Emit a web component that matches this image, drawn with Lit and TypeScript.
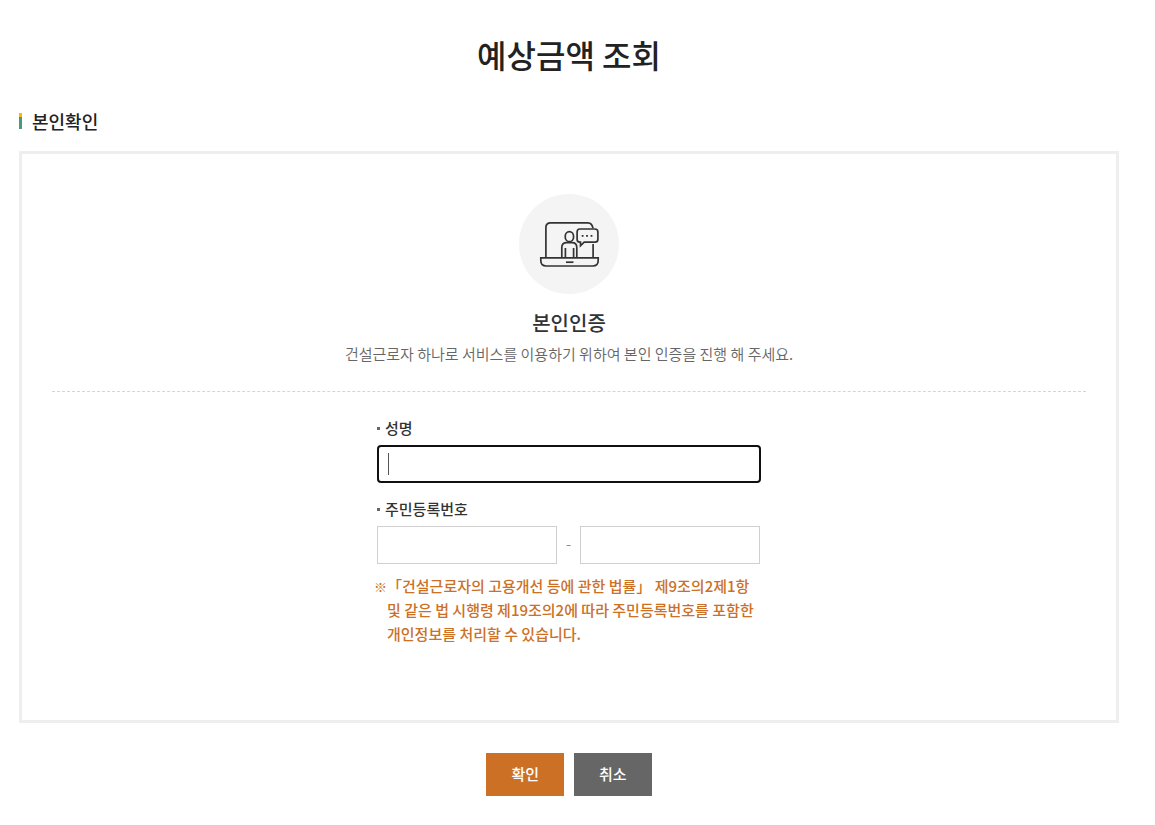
import { LitElement, html, css } from "lit";
import { customElement } from "lit/decorators.js";

@customElement("app-root")
export class AppRoot extends LitElement {
  static styles = css`
    :host {
      display: block;
      box-sizing: border-box;
      padding: 30px 36px 28px 19px;
      background: #fff;
      color: #222;
      font-family: "Noto Sans CJK KR", "Noto Sans", sans-serif;
      font-size: 15px;
      line-height: 24px;
    }
    * {
      box-sizing: border-box;
    }
    h1,
    h2,
    h3,
    p {
      margin: 0;
      font-weight: 500;
    }
    .page-title {
      font-size: 32px;
      line-height: 48px;
      text-align: center;
    }
    .section-title {
      display: flex;
      align-items: center;
      gap: 10px;
      margin: 31px 0 18px;
      font-size: 18px;
      line-height: 24px;
    }
    .section-title::before {
      content: "";
      width: 3px;
      height: 16px;
      background: linear-gradient(#fbb800 4px, #469b78 4px);
    }
    .panel {
      padding: 40px 30px 74px;
      border: 3px solid #eee;
    }
    .intro {
      display: flex;
      flex-direction: column;
      align-items: center;
      padding-bottom: 25px;
      border-bottom: 1px dashed #d5d5d5;
      text-align: center;
    }
    .badge {
      width: 100px;
      height: 100px;
      border-radius: 50%;
      background: #f4f4f4;
    }
    .badge svg {
      display: block;
    }
    .intro-title {
      margin-top: 14px;
      color: #333;
      font-size: 20px;
      line-height: 30px;
    }
    .intro-text {
      margin-top: 4px;
      color: #666;
      font-weight: 350;
    }
    .form {
      width: 384px;
      max-width: 100%;
      margin: 24px auto 0;
    }
    .label {
      display: flex;
      align-items: center;
      gap: 5px;
      margin-bottom: 5px;
      color: #333;
      font-weight: 500;
    }
    .label::before {
      content: "";
      width: 3px;
      height: 3px;
      background: #666;
    }
    .field {
      display: block;
      height: 38px;
      margin: 0;
      padding: 0 10px;
      border: 1px solid #d0d0d0;
      border-radius: 0;
      outline: none;
      background: #fff;
      color: #666;
      font: inherit;
    }
    .field.active {
      width: 100%;
      border: 2px solid #101010;
      border-radius: 4px;
      background: linear-gradient(#555, #555) 9px center / 1px 22px no-repeat #fff;
    }
    .field.half {
      flex: 0 1 180px;
      min-width: 0;
    }
    .row {
      display: flex;
      align-items: center;
    }
    .second {
      margin-top: 14px;
    }
    .dash {
      width: 23px;
      padding-bottom: 2px;
      color: #888;
      text-align: center;
      font-weight: 350;
    }
    .note {
      margin-top: 10px;
      padding-left: 10px;
      color: #cc7026;
      font-weight: 500;
      text-indent: -13px;
    }
    .mark {
      font-size: 13px;
      font-weight: 400;
      line-height: 1;
    }
    .actions {
      display: flex;
      justify-content: center;
      gap: 10px;
      margin-top: 30px;
    }
    .button {
      height: 43px;
      padding: 0 25px 2px;
      border: 0;
      background: #666;
      color: #fff;
      font: inherit;
      font-weight: 500;
      cursor: pointer;
    }
    .button.primary {
      background: #cc7026;
    }
  `;

  render() {
    return html`
      <main>
        <h1 class="page-title">예상금액 조회</h1>
        <h2 class="section-title">본인확인</h2>
        <form @submit=${(e: Event) => e.preventDefault()}>
          <section class="panel">
            <div class="intro">
              <div class="badge">
                <svg
                  width="100"
                  height="100"
                  viewBox="0 0 100 100"
                  fill="none"
                  stroke="#333"
                  stroke-width="1.7"
                  aria-hidden="true"
                >
                  <path d="M26.9 63V33.5Q26.9 28.8 31.6 28.8H69Q73 28.8 74 34.2M74.1 50V63" />
                  <path d="M21.8 63.8H79.2V66.5Q79.2 72 73.7 72H27.3Q21.8 72 21.8 66.5Z" />
                  <path d="M47 68.2H54.5" />
                  <ellipse cx="50.4" cy="42.7" rx="4.2" ry="5" />
                  <path d="M42.8 63V53.5Q42.8 48.6 47.7 48.6H53.1Q57.8 48.6 57.8 53.5V63M46.4 54V63M54.6 54V63" />
                  <path
                    d="M60.8 35H75.9Q78.9 35 78.9 38V45.2Q78.9 48.2 75.9 48.2H65.2L61.5 51.8V48.2H60.8Q58.1 48.2 58.1 45.2V38Q58.1 35 60.8 35Z"
                    fill="#f4f4f4"
                  />
                  <path d="M62.7 41.9H64.5M67.1 41.9H68.9M71.6 41.9H73.4" />
                </svg>
              </div>
              <h3 class="intro-title">본인인증</h3>
              <p class="intro-text">건설근로자 하나로 서비스를 이용하기 위하여 본인 인증을 진행 해 주세요.</p>
            </div>
            <div class="form">
              <label class="label" for="name">성명</label>
              <input class="field active" id="name" type="text" />
              <label class="label second" for="rrn-front">주민등록번호</label>
              <div class="row">
                <input class="field half" id="rrn-front" type="text" maxlength="6" />
                <span class="dash">-</span>
                <input
                  class="field half"
                  type="password"
                  maxlength="7"
                  aria-label="주민등록번호 뒷자리"
                />
              </div>
              <p class="note">
                <span class="mark">※</span>「건설근로자의 고용개선 등에 관한 법률」 제9조의2제1항<br />
                및 같은 법 시행령 제19조의2에 따라 주민등록번호를 포함한<br />
                개인정보를 처리할 수 있습니다.
              </p>
            </div>
          </section>
          <div class="actions">
            <button class="button primary" type="submit">확인</button>
            <button class="button" type="button">취소</button>
          </div>
        </form>
      </main>
    `;
  }
}
